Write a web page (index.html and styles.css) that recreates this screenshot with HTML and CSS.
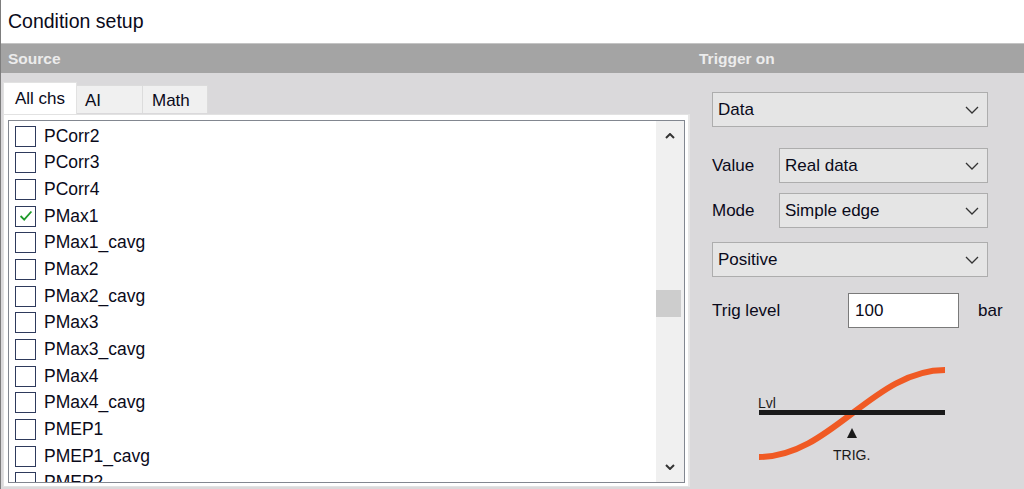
FILE: index.html
```html
<!DOCTYPE html>
<html>
<head>
<meta charset="utf-8">
<link rel="stylesheet" href="styles.css">
</head>
<body>
<div class="window">
  <div class="titlebar">Condition setup</div>
  <div class="header">
    <div class="hsrc">Source</div>
    <div class="htrig">Trigger on</div>
  </div>
  <div class="content">
    <div class="left">
      <div class="tabs">
        <div class="tab active">All chs</div>
        <div class="tab">AI</div>
        <div class="tab">Math</div>
      </div>
      <div class="page">
        <div class="listbox">
          <div class="items">
            <div class="item"><span class="cb"></span><span>PCorr2</span></div>
            <div class="item"><span class="cb"></span><span>PCorr3</span></div>
            <div class="item"><span class="cb"></span><span>PCorr4</span></div>
            <div class="item"><span class="cb"><svg viewBox="0 0 20 20" width="18" height="18"><polyline points="4,10 8,14 16,5" fill="none" stroke="#1e9a2a" stroke-width="2"/></svg></span><span>PMax1</span></div>
            <div class="item"><span class="cb"></span><span>PMax1_cavg</span></div>
            <div class="item"><span class="cb"></span><span>PMax2</span></div>
            <div class="item"><span class="cb"></span><span>PMax2_cavg</span></div>
            <div class="item"><span class="cb"></span><span>PMax3</span></div>
            <div class="item"><span class="cb"></span><span>PMax3_cavg</span></div>
            <div class="item"><span class="cb"></span><span>PMax4</span></div>
            <div class="item"><span class="cb"></span><span>PMax4_cavg</span></div>
            <div class="item"><span class="cb"></span><span>PMEP1</span></div>
            <div class="item"><span class="cb"></span><span>PMEP1_cavg</span></div>
            <div class="item"><span class="cb"></span><span>PMEP2</span></div>
          </div>
          <div class="scrollbar">
            <svg class="arrow" viewBox="0 0 10 6" width="10" height="6"><polyline points="1,5 5,1 9,5" fill="none" stroke="#333" stroke-width="2"/></svg>
            <div class="track"><div class="thumb"></div></div>
            <svg class="arrow" viewBox="0 0 10 6" width="10" height="6"><polyline points="1,1 5,5 9,1" fill="none" stroke="#333" stroke-width="2"/></svg>
          </div>
        </div>
      </div>
    </div>
    <div class="right">
      <div class="select wide"><span>Data</span><svg class="chev" viewBox="0 0 14 8" width="14" height="8"><polyline points="1,1 7,7 13,1" fill="none" stroke="#333" stroke-width="1.3"/></svg></div>
      <div class="row r-value"><span class="label">Value</span><div class="select"><span>Real data</span><svg class="chev" viewBox="0 0 14 8" width="14" height="8"><polyline points="1,1 7,7 13,1" fill="none" stroke="#333" stroke-width="1.3"/></svg></div></div>
      <div class="row r-mode"><span class="label">Mode</span><div class="select"><span>Simple edge</span><svg class="chev" viewBox="0 0 14 8" width="14" height="8"><polyline points="1,1 7,7 13,1" fill="none" stroke="#333" stroke-width="1.3"/></svg></div></div>
      <div class="select wide r-pos"><span>Positive</span><svg class="chev" viewBox="0 0 14 8" width="14" height="8"><polyline points="1,1 7,7 13,1" fill="none" stroke="#333" stroke-width="1.3"/></svg></div>
      <div class="row r-trig"><span class="tlabel">Trig level</span><div class="input">100</div><span class="unit">bar</span></div>
      <svg class="diagram" viewBox="0 0 200 110" width="200" height="110">
        <path d="M6,97 C78,97 120,10 192,10" fill="none" stroke="#f05a24" stroke-width="6"/>
        <rect x="6" y="50" width="186" height="5" fill="#1a1a1a"/>
        <text x="5" y="48" class="dtext">Lvl</text>
        <polygon points="99,68 94,78 104,78" fill="#1a1a1a"/>
        <text x="80" y="100" class="dtext">TRIG.</text>
      </svg>
    </div>
  </div>
</div>
</body>
</html>
```
FILE: styles.css
```css
* { box-sizing: border-box; }
html, body { margin: 0; padding: 0; }
body {
  width: 1024px;
  height: 489px;
  overflow: hidden;
  background: #dad9db;
  font-family: "Liberation Sans", Arial, sans-serif;
  color: #0a0a1a;
}
.window {
  height: 489px;
  border-left: 1px solid #7d7d7d;
  display: flex;
  flex-direction: column;
}
.titlebar {
  height: 44px;
  background: #fff;
  border-bottom: 1px solid #c4c4c4;
  padding-left: 7px;
  font-size: 19.5px;
  line-height: 42px;
}
.header {
  height: 29px;
  background: #a4a4a4;
  display: flex;
  align-items: center;
  color: #ececec;
  font-weight: bold;
  font-size: 15.5px;
}
.hsrc { width: 698px; padding-left: 7px; }
.htrig { padding-left: 0; }
.content {
  flex: 1;
  display: flex;
  min-height: 0;
}
.left {
  width: 690px;
  flex: none;
  padding: 9px 0 0 2px;
  display: flex;
  flex-direction: column;
}
.tabs {
  display: flex;
  align-items: flex-end;
  height: 32px;
}
.tab {
  height: 28px;
  margin-bottom: 1px;
  background: #f0f0f0;
  border: 1px solid #dcdcdc;
  border-bottom: none;
  font-size: 17px;
  padding-left: 8px;
  line-height: 29px;
  width: 66px;
}
.tab + .tab { border-left: none; }
.tab:nth-child(3) { width: 65px; padding-left: 9px; }
.tab.active {
  height: 32px;
  margin-bottom: 0;
  width: 74px;
  background: #fff;
  padding-left: 11px;
  line-height: 32px;
  border-color: #e2e2e2;
}
.page {
  width: 687px;
  height: 373px;
  background: #fff;
  border: 1px solid #e2e2e2;
  border-right: 2px solid #e6e6e6;
  padding: 5px 0 0 4px;
}
.listbox {
  width: 677px;
  height: 363px;
  border: 1px solid #828790;
  display: flex;
  overflow: hidden;
}
.items {
  flex: 1;
  padding: 2px 0 0 6px;
  overflow: hidden;
}
.item {
  height: 26.67px;
  display: flex;
  align-items: center;
  font-size: 17.5px;
}
.cb {
  width: 21px;
  height: 21px;
  border: 1.5px solid #2e3a5c;
  margin-right: 8px;
  display: flex;
  align-items: center;
  justify-content: center;
  background: #fff;
  flex: none;
}
.scrollbar {
  width: 28px;
  background: #f0f0f0;
  display: flex;
  flex-direction: column;
  align-items: center;
}
.arrow { margin: 12px 0; flex: none; }
.track { flex: 1; width: 100%; }
.thumb {
  margin-top: 139px;
  width: 25px;
  height: 27px;
  background: #cdcdcd;
}
.right {
  flex: 1;
  min-width: 0;
  padding: 19px 36px 0 21px;
  display: flex;
  flex-direction: column;
  font-size: 17px;
}
.select {
  height: 35px;
  background: #e5e5e5;
  border: 1px solid #adadad;
  display: flex;
  align-items: center;
  justify-content: space-between;
  padding: 0 8px 0 5px;
  flex: 1;
  min-width: 0;
}
.select.wide { flex: none; }
.row { display: flex; align-items: center; min-width: 0; }
.label { width: 67px; flex: none; }
.r-value { margin-top: 21px; }
.r-mode { margin-top: 10px; }
.r-pos { margin-top: 14px; }
.r-trig { margin-top: 16px; }
.tlabel { width: 136px; flex: none; }
.input {
  width: 111px;
  flex: none;
  height: 35px;
  background: #fff;
  border: 1px solid #7a7a7a;
  padding-left: 6px;
  line-height: 33px;
}
.unit { margin-left: 19px; flex: none; }
.diagram {
  margin: 32px 0 0 41px;
  overflow: visible;
  flex: none;
}
.dtext {
  font-family: "Liberation Sans", Arial, sans-serif;
  font-size: 14px;
  fill: #1a1a1a;
}
```
